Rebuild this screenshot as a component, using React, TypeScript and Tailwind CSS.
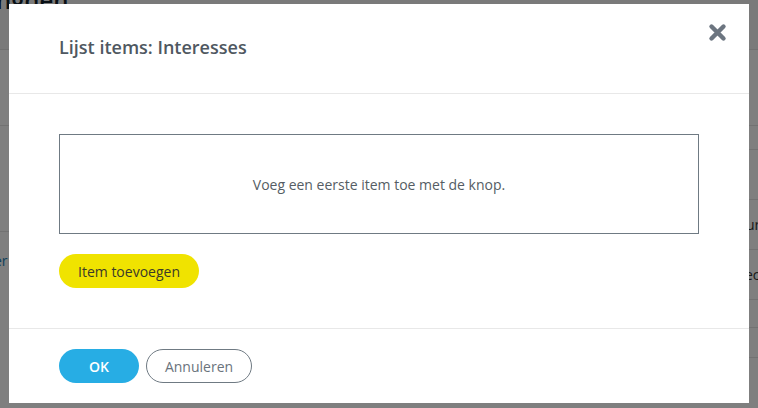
import React from "react";

function Row({ h, line = true, children }: { h: string; line?: boolean; children?: React.ReactNode }) {
  return (
    <div className={`${h} ${line ? "border-b border-[#e5e5e5]" : ""} flex items-center text-[14px]`}>
      {children}
    </div>
  );
}

export default function App() {
  return (
    <div
      className="relative w-[758px] h-[408px] overflow-hidden bg-white"
      style={{ fontFamily: '"Open Sans", "Liberation Sans", sans-serif' }}
    >
      {/* background page */}
      <div className="absolute inset-0 flex flex-col">
        <div className="h-[50px] shrink-0 bg-[#f4f4f4] border-b border-[#e2e2e2] overflow-hidden">
          <div className="text-[24px] leading-none text-[#10202b] -mt-[12px] -ml-[4px] font-semibold whitespace-nowrap">
            ngden
          </div>
        </div>
        <div className="flex-1 flex justify-between">
          <div className="w-[20px] flex flex-col">
            <Row h="h-[76px]" />
            <Row h="h-[106px]" />
            <Row h="h-[56px]" line={false}>
              <span className="-ml-[6px] text-[#1b7fb5] whitespace-nowrap">er</span>
            </Row>
          </div>
          <div className="w-[12px] flex flex-col">
            <Row h="h-[76px]" />
            <Row h="h-[24px]" />
            <Row h="h-[50px]" />
            <Row h="h-[50px]">
              <span className="text-[#333] whitespace-nowrap">ur</span>
            </Row>
            <Row h="h-[50px]">
              <span className="-ml-[1px] text-[#333] whitespace-nowrap">ec</span>
            </Row>
            <Row h="h-[28px]" />
            <Row h="h-[30px]" />
          </div>
        </div>
      </div>
      {/* overlay */}
      <div className="absolute inset-0 bg-black/50" />
      {/* modal */}
      <div className="absolute left-[9px] top-[4px] w-[740px] h-[399px] bg-white flex flex-col">
        <div className="relative h-[90px] border-b border-[#e8e8e8] flex items-center pl-[50px] pb-[2px]">
          <h2 className="text-[18px] font-semibold text-[#4f5861]">Lijst items: Interesses</h2>
          <button className="absolute right-[22px] top-[19px] w-[19px] h-[19px]">
            <svg viewBox="0 0 19 19" width="19" height="19">
              <path d="M3.5 3.5 L15.5 15.5 M15.5 3.5 L3.5 15.5" stroke="#6c7580" strokeWidth="4.4" strokeLinecap="round" />
            </svg>
          </button>
        </div>
        <div className="flex flex-col items-start px-[50px] pt-[40px] pb-[40px] border-b border-[#e8e8e8]">
          <div className="w-full h-[100px] border border-[#6f7a83] flex items-center justify-center">
            <span className="text-[14px] text-[#555d64]">Voeg een eerste item toe met de knop.</span>
          </div>
          <button className="mt-[20px] h-[34px] w-[140px] rounded-full bg-[#f0e300] text-[14px] text-[#3a3a2a]">
            Item toevoegen
          </button>
        </div>
        <div className="flex items-center gap-[7px] px-[50px] pt-[20px]">
          <button className="w-[80px] h-[34px] rounded-full bg-[#27ade4] text-white text-[14px] font-semibold">
            OK
          </button>
          <button className="w-[106px] h-[34px] rounded-full border border-[#6f7a83] bg-white text-[#6a737c] text-[14px]">
            Annuleren
          </button>
        </div>
      </div>
    </div>
  );
}
